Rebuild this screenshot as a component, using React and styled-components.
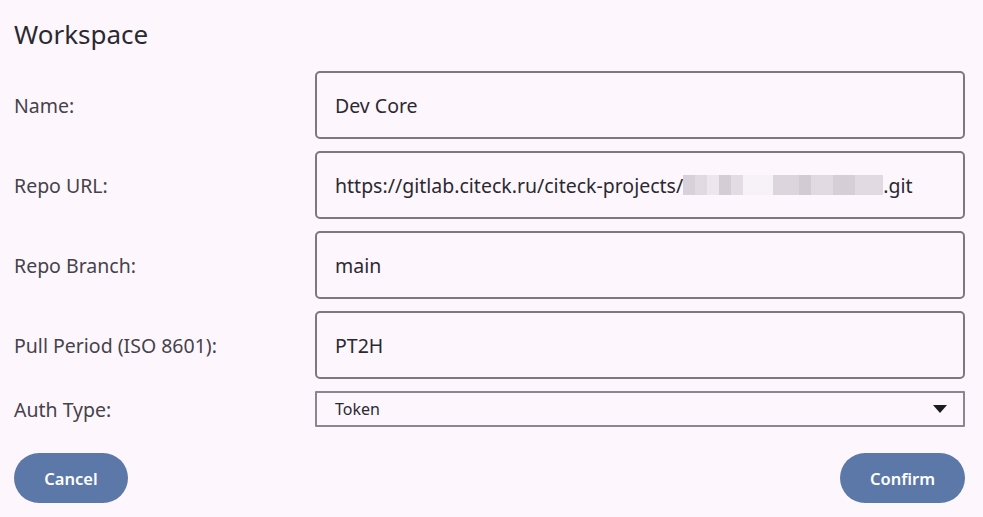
import styled, { createGlobalStyle } from "styled-components";

const GlobalStyle = createGlobalStyle`
  html, body {
    margin: 0;
    padding: 0;
    background: #fdf7fd;
  }
  body {
    font-family: "Noto Sans", "Open Sans", sans-serif;
    color: #2b2930;
  }
`;

const Dialog = styled.div`
  width: 983px;
  height: 517px;
  box-sizing: border-box;
  padding: 16px 18px 0 14px;
  display: flex;
  flex-direction: column;
`;

const Title = styled.h1`
  margin: 0 0 18px;
  font-size: 26px;
  font-weight: 400;
  line-height: 37px;
  color: #2b2930;
`;

const Form = styled.div`
  display: flex;
  flex-direction: column;
  gap: 12px;
`;

const Row = styled.div`
  display: grid;
  grid-template-columns: 301px 1fr;
  align-items: center;
`;

const Label = styled.label`
  font-size: 19.5px;
  color: #45424a;
`;

const Field = styled.div`
  height: 68px;
  box-sizing: border-box;
  border: 2px solid #7b7880;
  border-radius: 5px;
  display: flex;
  align-items: center;
  padding: 0 18px;
  font-size: 19.5px;
  color: #2b2930;
  white-space: nowrap;
`;

const Blurred = styled.span`
  display: inline-block;
  width: 200px;
  height: 20px;
  vertical-align: middle;
  background:
    linear-gradient(90deg,
      #d4cdd6 0 12px, #ddd6df 12px 24px, #ebe4ed 24px 36px, #cfc8d1 36px 48px,
      #e0d9e2 48px 60px, #f6f0f7 60px 90px, #d8d1da 90px 116px, #cdc6cf 116px 128px,
      #ddd6df 128px 150px, #d1cad3 150px 172px, #ddd6df 172px 200px);
  opacity: 0.9;
`;

const Select = styled.div`
  height: 36px;
  box-sizing: border-box;
  border: 2px solid #8a8790;
  border-radius: 1px;
  display: flex;
  align-items: center;
  justify-content: space-between;
  padding: 0 16px 0 18px;
  font-size: 16px;
  color: #2b2930;
`;

const Caret = styled.span`
  width: 0;
  height: 0;
  border-left: 7px solid transparent;
  border-right: 7px solid transparent;
  border-top: 8px solid #1c1b1f;
`;

const Footer = styled.div`
  margin-top: 26px;
  display: flex;
  justify-content: space-between;
`;

const Button = styled.button`
  height: 50px;
  width: ${(p) => p.$w}px;
  border: none;
  border-radius: 25px;
  background: #5b78a8;
  color: #fff;
  font-family: "Noto Sans", "Open Sans", sans-serif;
  font-size: 16.5px;
  font-weight: 600;
  cursor: pointer;
`;

const fields = [
  { label: "Name:", value: "Dev Core" },
  { label: "Repo URL:", value: "url" },
  { label: "Repo Branch:", value: "main" },
  { label: "Pull Period (ISO 8601):", value: "PT2H" },
];

export default function App() {
  return (
    <>
      <GlobalStyle />
      <Dialog>
        <Title>Workspace</Title>
        <Form>
          {fields.map((f) => (
            <Row key={f.label}>
              <Label>{f.label}</Label>
              <Field>
                {f.value === "url" ? (
                  <>
                    https://gitlab.citeck.ru/citeck-projects/
                    <Blurred />
                    .git
                  </>
                ) : (
                  f.value
                )}
              </Field>
            </Row>
          ))}
          <Row>
            <Label>Auth Type:</Label>
            <Select>
              Token
              <Caret />
            </Select>
          </Row>
        </Form>
        <Footer>
          <Button $w={114}>Cancel</Button>
          <Button $w={125}>Confirm</Button>
        </Footer>
      </Dialog>
    </>
  );
}
